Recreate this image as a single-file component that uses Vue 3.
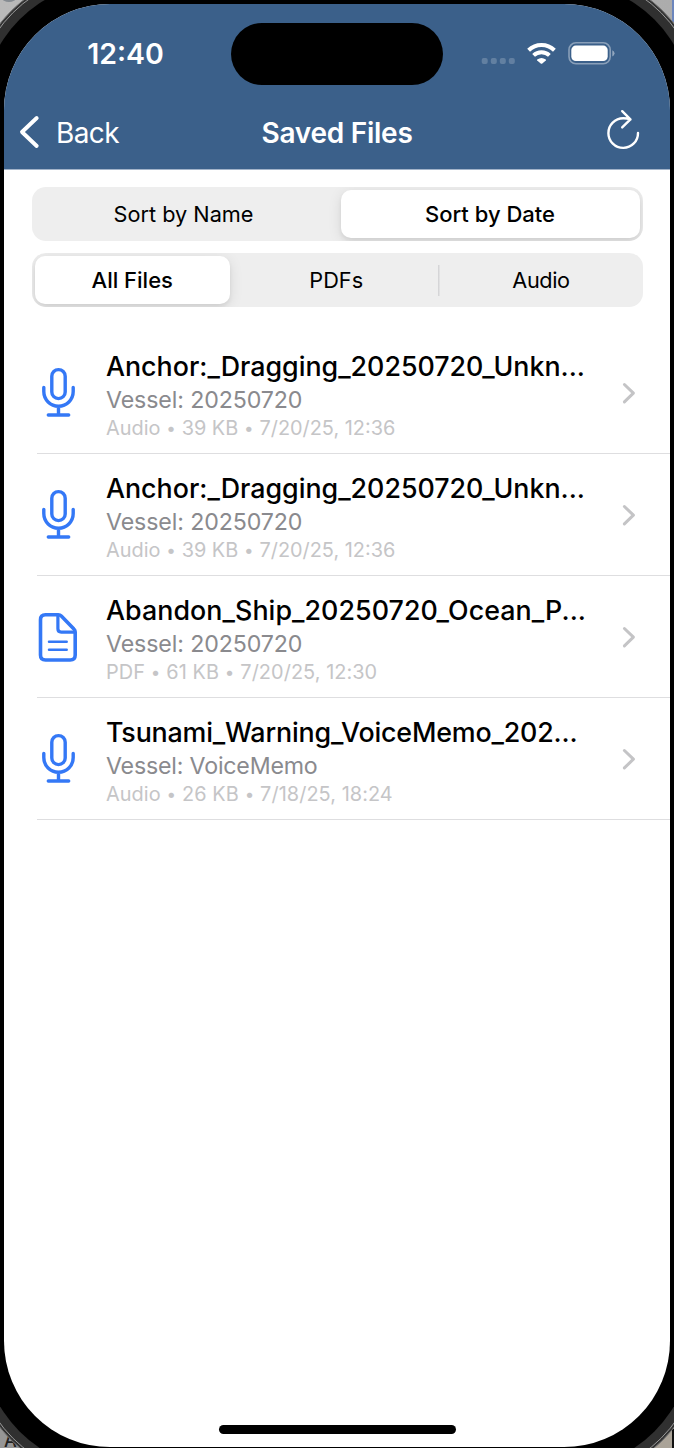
<script setup>
const sortOptions = [
  { label: 'Sort by Name', active: false, place: 'lead' },
  { label: 'Sort by Date', active: true },
]
const filterOptions = [
  { label: 'All Files', active: true },
  { label: 'PDFs', active: false, place: 'middle' },
  { label: 'Audio', active: false, place: 'divided' },
]
const files = [
  { id: 1, icon: 'mic', name: 'Anchor:_Dragging_20250720_Unkn...', vessel: '20250720', meta: ['Audio', '39 KB', '7/20/25, 12:36'], fit: 'normal' },
  { id: 2, icon: 'mic', name: 'Anchor:_Dragging_20250720_Unkn...', vessel: '20250720', meta: ['Audio', '39 KB', '7/20/25, 12:36'], fit: 'normal' },
  { id: 3, icon: 'doc', name: 'Abandon_Ship_20250720_Ocean_P...', vessel: '20250720', meta: ['PDF', '61 KB', '7/20/25, 12:30'], fit: 'wide' },
  { id: 4, icon: 'mic', name: 'Tsunami_Warning_VoiceMemo_202...', vessel: 'VoiceMemo', meta: ['Audio', '26 KB', '7/18/25, 18:24'], fit: 'tight' },
]
</script>

<template>
  <div class="stage">
    <svg class="frame" viewBox="0 0 674 1448" aria-hidden="true">
      <defs>
        <linearGradient id="deskTop" x1="0" x2="1" y1="0" y2="0">
          <stop offset="0" stop-color="#b9b9b9" />
          <stop offset="1" stop-color="#acacac" />
        </linearGradient>
      </defs>
      <rect width="674" height="1448" fill="url(#deskTop)" />
      <ellipse cx="9" cy="-2" rx="7" ry="4" fill="#858b91" />
      <rect x="672" y="0" width="2" height="22" fill="#6c86bd" />
      <rect x="0" y="1400" width="40" height="48" fill="#969696" />
      <rect x="640" y="1400" width="34" height="48" fill="#aaa398" />
      <text x="4" y="1447" class="desk-letter">A</text>
      <rect x="672" y="1429" width="2" height="19" fill="#111" />
      <rect x="-29.5" y="-29.5" width="733" height="1510" rx="138.5" fill="#333" stroke="#777" stroke-width="1" />
      <rect x="-27" y="-27" width="728" height="1505" rx="136" fill="#303030" stroke="#9a9a9a" stroke-width="1" />
      <rect x="-17.5" y="-17.5" width="709" height="1486" rx="126.5" fill="#000" />
    </svg>

    <main class="screen">
      <header class="header">
        <div class="status">
          <span class="time">12:40</span>
          <span class="island"></span>
          <svg class="indicators" width="136" height="28" viewBox="480 40 136 28" aria-hidden="true">
            <g fill="#fff" opacity=".2">
              <rect x="481.7" y="58" width="6" height="6" rx="2" />
              <rect x="490.8" y="58" width="6" height="6" rx="2" />
              <rect x="499.8" y="58" width="6" height="6" rx="2" />
              <rect x="508.8" y="58" width="6" height="6" rx="2" />
            </g>
            <g fill="none" stroke="#fff" stroke-width="4">
              <path d="M528.6 50.2a18.4 18.4 0 0 1 25.800 0" />
              <path d="M533.600 55.400a11.400 11.400 0 0 1 15.800 0" />
            </g>
            <path d="M537.200 59.400q4.300-3 8.600 0 .5.5 0 1l-3.500 3q-.8.6-1.600 0l-3.500-3q-.5-.5 0-1z" fill="#fff" />
            <rect x="569" y="42.800" width="41.200" height="21" rx="7" fill="none" stroke="#fff" stroke-opacity=".4" stroke-width="1.600" />
            <rect x="571.300" y="45.600" width="36.400" height="15.400" rx="4.500" fill="#fff" />
            <path d="M612.300 50.200q2.200.8 2.200 3.100t-2.200 3.100z" fill="#fff" opacity=".45" />
          </svg>
        </div>
        <nav class="nav">
          <a class="back">
            <svg width="22" height="36" viewBox="18 114 22 36" aria-hidden="true">
              <path d="M36.700 118 22 132l14.700 14" fill="none" stroke="#fff" stroke-width="3.900" stroke-linecap="round" stroke-linejoin="round" />
            </svg>
            <span>Back</span>
          </a>
          <h1 class="title">Saved Files</h1>
          <svg class="refresh" width="36" height="44" viewBox="605 108 36 44" aria-hidden="true">
            <path d="M638 132.900a14.800 14.800 0 1 1-14.800-14.600q4 0 7.300 1M622.200 111.200l8.200 8.100-8.200 8.100" fill="none" stroke="#fff" stroke-width="2.400" stroke-linecap="round" stroke-linejoin="round" />
          </svg>
        </nav>
      </header>

      <section class="controls">
        <div class="segmented">
          <button v-for="o in sortOptions" :key="o.label" class="segment" :class="[o.place, { active: o.active }]">{{ o.label }}</button>
        </div>
        <div class="segmented thirds">
          <button v-for="o in filterOptions" :key="o.label" class="segment" :class="[o.place, { active: o.active }]">{{ o.label }}</button>
        </div>
      </section>

      <ul class="files">
        <li v-for="f in files" :key="f.id" class="file" :class="f.fit">
          <svg v-if="f.icon === 'mic'" class="file-icon" width="42" height="54" viewBox="37 365 42 54" aria-hidden="true">
            <g fill="none" stroke="#3478f6" stroke-width="3.400" stroke-linecap="round">
              <rect x="51.800" y="369.600" width="13.400" height="29" rx="6.700" />
              <path d="M43.800 387.400v4.200a14.700 14.700 0 0 0 29.400 0v-4.200M58.500 406.500v8.200M48.300 415h20.400" />
            </g>
          </svg>
          <svg v-else class="file-icon" width="42" height="54" viewBox="37 609 42 54" aria-hidden="true">
            <g fill="none" stroke="#3478f6" stroke-width="3.600" stroke-linecap="round" stroke-linejoin="round">
              <path d="M45.500 614.800h12.800q1.800 0 3 1.200l12.600 13q1.300 1.200 1.300 3v23q0 5-5 5H45.500q-5 0-5-5v-35.200q0-5 5-5z" />
              <path d="M57.900 615.500v13.300q0 3.300 3.300 3.300h13" stroke-width="3.200" />
              <path d="M49 641.700h17.700M49 649.700h17.700" stroke-width="2.500" />
            </g>
          </svg>
          <div class="details">
            <div class="name">{{ f.name }}</div>
            <div class="vessel">Vessel: {{ f.vessel }}</div>
            <div class="meta">
              <template v-for="(m, i) in f.meta" :key="m"><template v-if="i">&nbsp;<span class="dot">•</span>&nbsp;</template>{{ m }}</template>
            </div>
          </div>
          <svg class="chevron" width="16" height="24" viewBox="621 381 16 24" aria-hidden="true">
            <path d="M624.400 384.500l9 8.700-9 8.700" fill="none" stroke="#c4c4c6" stroke-width="3" stroke-linecap="round" stroke-linejoin="round" />
          </svg>
        </li>
      </ul>
      <div class="home-bar"></div>
    </main>
  </div>
</template>

<style>
body { margin: 0; }
</style>

<style scoped>
.stage {
  position: relative;
  box-sizing: border-box;
  width: 674px;
  height: 1448px;
  padding: 4px 4px 1px;
  overflow: hidden;
  font-family: Inter, "Liberation Sans", sans-serif;
}
.frame { position: absolute; left: 0; top: 0; width: 674px; height: 1448px; }
.desk-letter { font: 500 18px Inter, sans-serif; fill: #222; }
.screen {
  position: relative;
  display: flex;
  flex-direction: column;
  width: 666px;
  height: 1443px;
  overflow: hidden;
  border-radius: 106px;
  background: #fff;
}
.header {
  box-sizing: border-box;
  height: 166px;
  flex: none;
  background: #3b608a;
  border-bottom: 1px solid #a2b3c9;
  color: #fff;
}
.status {
  display: grid;
  grid-template-columns: 227px 212px 1fr;
  align-items: center;
  height: 100px;
}
.time { padding-left: 16px; text-align: center; font-size: 28.500px; font-weight: 600; line-height: 36px; }
.island { height: 62px; border-radius: 31px; background: #000; }
.indicators { margin-left: 37px; }
.nav {
  display: grid;
  grid-template-columns: 1fr auto 1fr;
  align-items: center;
  height: 56px;
  padding: 0 29px 0 14px;
}
.back { display: flex; align-items: center; gap: 16px; font-size: 28px; line-height: 36px; letter-spacing: -.6px; }
.back span { padding-top: 1px; }
.title { margin: 1px -15px 0 0; font-size: 28px; font-weight: 600; line-height: 36px; letter-spacing: -.25px; }
.refresh { justify-self: end; margin-top: -4px; }
.controls { display: flex; flex-direction: column; gap: 12px; padding: 16.500px 27.500px 0; }
.segmented {
  box-sizing: border-box;
  display: grid;
  grid-template-columns: 1fr 299px;
  height: 54px;
  padding: 3px;
  border-radius: 14px;
  background: #eee;
  overflow: hidden;
}
.thirds { grid-template-columns: 195.500px 1fr 203px; }
.segment {
  padding: 1px 0 0;
  border: 0;
  background: none;
  font: 400 21.700px/47px Inter, sans-serif;
  color: #000;
}
.segment.active {
  border-radius: 10px;
  background: #fff;
  font-size: 22px;
  font-weight: 500;
  box-shadow: 0 3px 4px rgba(0, 0, 0, .06), 0 3px 14px rgba(0, 0, 0, .1);
}
.segment.lead { padding-right: 8px; }
.segment.middle { padding-left: 6px; }
.segment.divided {
  padding-left: 6px;
  letter-spacing: -.4px;
  background: linear-gradient(#d5d5d7, #d5d5d7) 1px 9px / 1.500px 31px no-repeat;
}
.files { margin: 25.500px 0 0; padding: 0 0 0 33px; list-style: none; }
.file {
  box-sizing: border-box;
  display: flex;
  height: 122px;
  border-bottom: 1px solid #dedee0;
}
.file-icon { flex: none; margin-top: 33px; }
.details { width: 501px; margin-left: 27px; padding-top: 16.600px; white-space: nowrap; }
.name { font-size: 26.800px; font-weight: 500; line-height: 34px; color: #000; }
.vessel { font-size: 23.200px; line-height: 35px; letter-spacing: -.12px; color: #8a8a8e; }
.meta { font-size: 19.900px; line-height: 21px; color: #c5c5c7; }
.dot { display: inline-block; width: 10px; text-align: center; font-size: 17px; line-height: 14px; vertical-align: 1px; }
.wide .name { letter-spacing: .07px; }
.tight .name { letter-spacing: -.16px; }
.tight .vessel { letter-spacing: -.2px; }
.wide .meta, .tight .meta { letter-spacing: .06px; }
.chevron { margin: 49px 0 0 14px; }
.home-bar { width: 237px; height: 8.500px; margin: auto auto 13.500px; border-radius: 5px; background: #000; }
</style>
